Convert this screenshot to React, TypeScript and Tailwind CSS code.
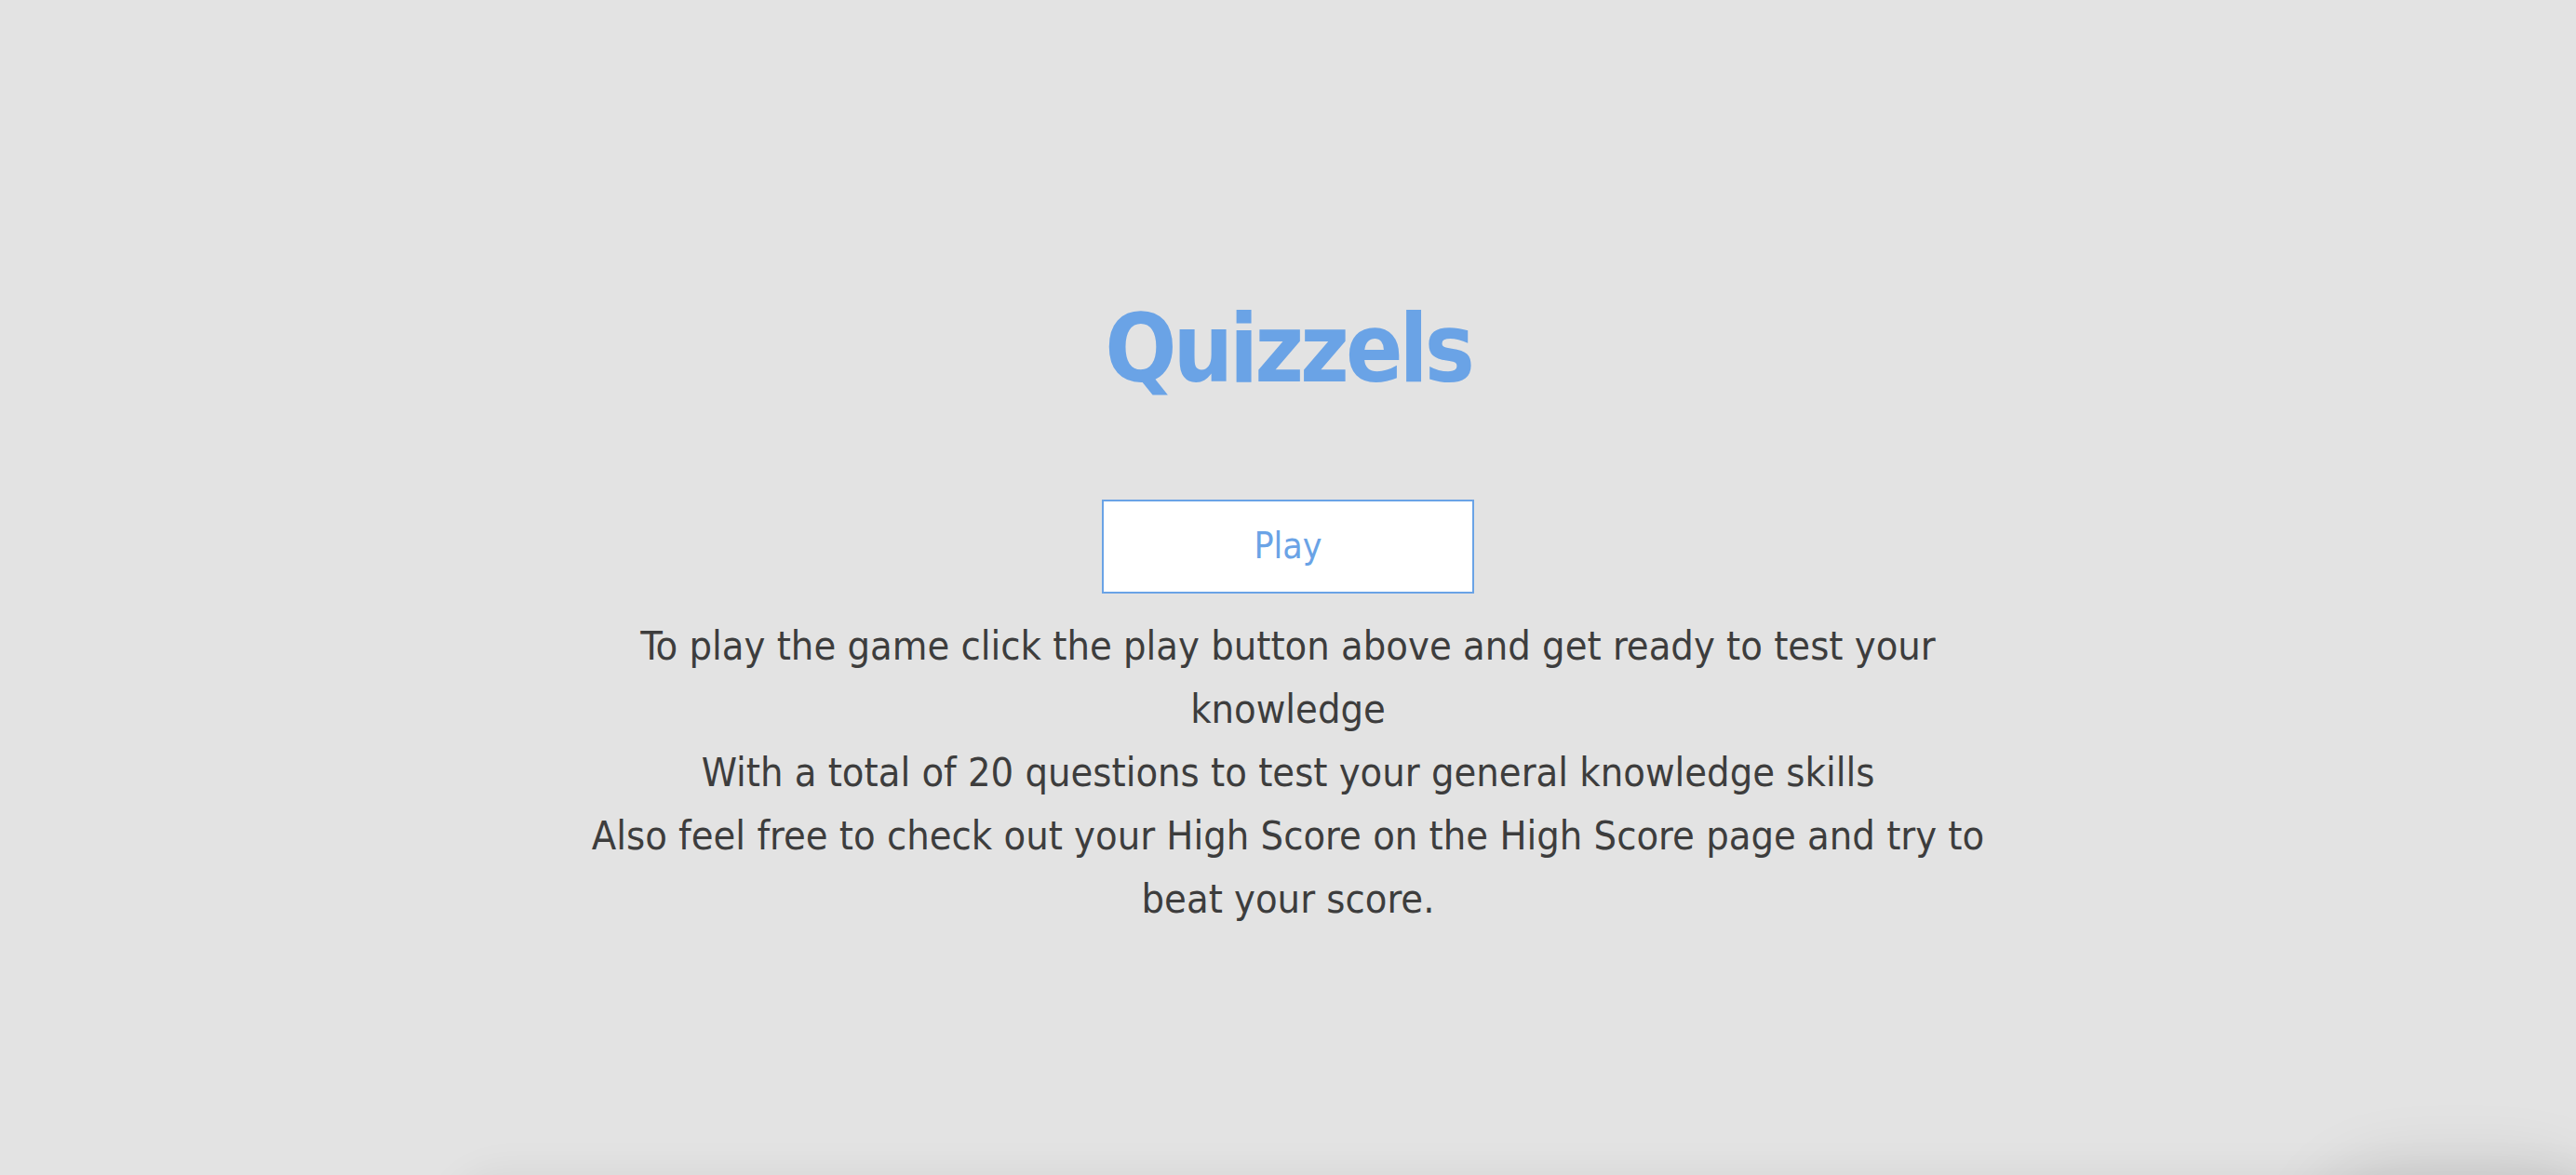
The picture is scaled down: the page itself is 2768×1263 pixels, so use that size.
import React from 'react';

const lines = [
  'To play the game click the play button above and get ready to test your knowledge',
  'With a total of 20 questions to test your general knowledge skills',
  'Also feel free to check out your High Score on the High Score page and try to beat your score.',
];

const App: React.FC = () => {
  return (
    <div
      className="relative h-screen w-full overflow-hidden bg-[#e3e3e3]"
      style={{ fontFamily: '"DejaVu Sans", "Liberation Sans", sans-serif' }}
    >
      <main className="flex flex-col items-center pt-[320px]">
        <h1 className="text-[101px] leading-[1.1] font-bold text-[#6aa3e6] font-stretch-condensed tracking-[-4px]">
          Quizzels
        </h1>
        <button className="mt-[106px] w-[400px] h-[101px] bg-white border-2 border-[#6aa3e6] text-[#6aa3e6] text-[39px] font-stretch-condensed">
          Play
        </button>
        <div className="mt-[22px] max-w-[1520px] text-center text-[43px] leading-[68px] text-[#3d3d3d] font-stretch-condensed">
          {lines.map((l) => (
            <p key={l}>{l}</p>
          ))}
        </div>
      </main>
      <div className="absolute left-[480px] right-[-40px] top-full h-[200px] rounded-[60px] shadow-[0_-6px_40px_rgba(0,0,0,0.05)]" />
      <div className="absolute left-[2480px] right-[-40px] top-full h-[200px] rounded-[120px] shadow-[0_-14px_70px_rgba(0,0,0,0.10)]" />
    </div>
  );
};

export default App;
